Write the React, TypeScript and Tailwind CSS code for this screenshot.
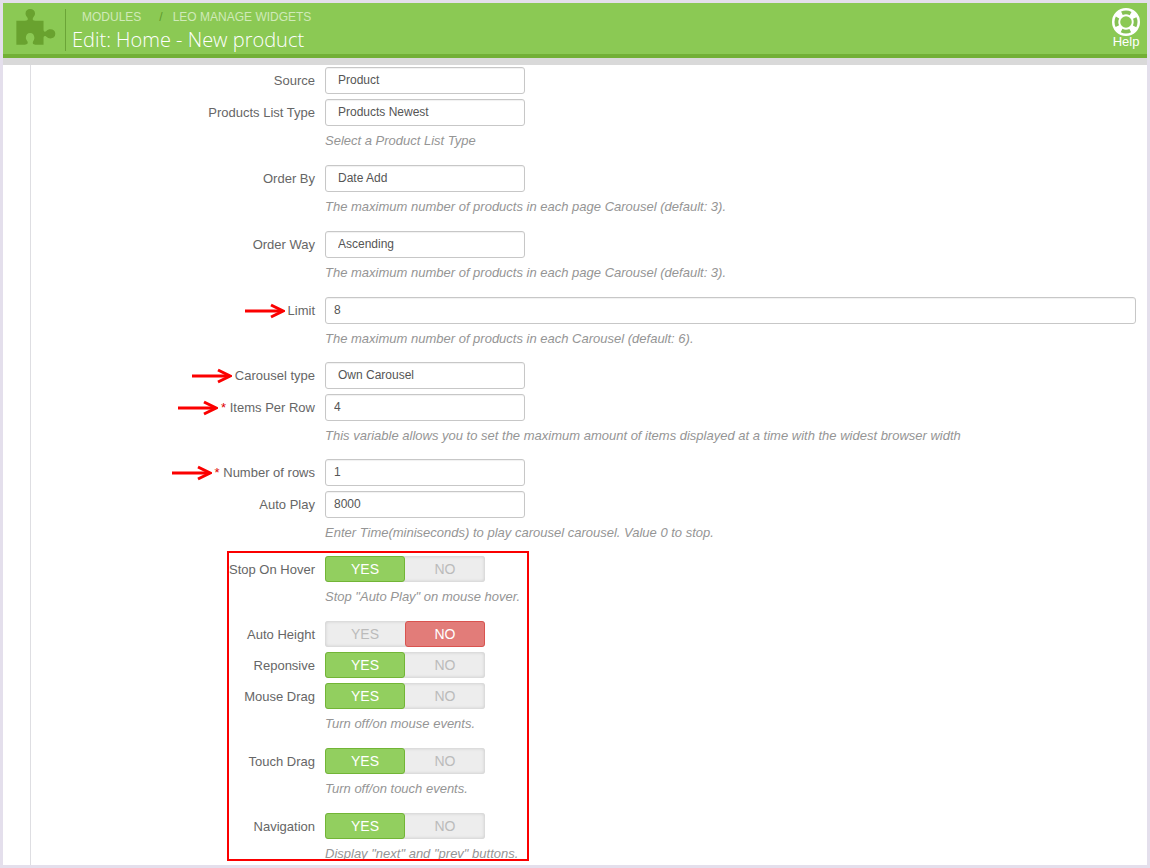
import { useState, type ReactNode } from 'react';

function PuzzleIcon() {
  return (
    <svg className="h-9 w-10 shrink-0" viewBox="0 0 120 110" fill="#69a22f" aria-hidden="true">
      <path d="M0 36 H26 C34 36 37 33 34 27 C30 22 28 18 28 14 C28 5 34 0 42 0 C51 0 57 5 57 14 C57 18 55 22 51 27 C48 33 51 36 58 36 H83 V62 C83 69 86 71 91 68 C95 64 99 62 104 62 C113 62 119 67 119 76 C119 85 113 90 104 90 C99 90 95 88 91 84 C86 81 83 83 83 90 V109 H58 C50 108 49 104 51 99 C54 95 55 92 55 88 C55 79 50 73 42 73 C34 73 29 79 29 88 C29 92 31 95 34 99 C36 104 34 108 26 109 H0 Z" />
    </svg>
  );
}

function LifebuoyIcon() {
  return (
    <svg className="size-7" viewBox="0 0 28 28" fill="none" aria-hidden="true">
      <circle cx="14" cy="14" r="9.9" stroke="#fff" strokeWidth="8.2" />
      <circle cx="14" cy="14" r="9.6" stroke="#85c154" strokeWidth="3.8" strokeDasharray="9 6.08" strokeDashoffset="4.5" />
    </svg>
  );
}

function Arrow() {
  return (
    <svg className="h-4 w-10 shrink-0" viewBox="0 0 40 16" fill="none" stroke="#fb0000" strokeWidth="3" aria-hidden="true">
      <path d="M0 8H37" />
      <path d="M26 2L38 8L26 14" />
    </svg>
  );
}

type RowProps = {
  id: string;
  label: string;
  arrow?: boolean;
  required?: boolean;
  hint?: string;
  hintClass?: string;
  children: ReactNode;
};

function Row({ id, label, arrow, required, hint, hintClass = 'mb-[9px]', children }: RowProps) {
  return (
    <div className="flex gap-2.5">
      <div className="flex h-[26px] w-[284px] shrink-0 items-center justify-end gap-[3px] pt-0.5">
        {arrow && <Arrow />}
        <label id={`${id}-label`} htmlFor={id} className="whitespace-nowrap">
          {required && <span className="text-[#e00000]">* </span>}
          {label}
        </label>
      </div>
      <div className="min-w-0 flex-1">
        {children}
        {hint && <p className={`mt-1.5 leading-[18px] whitespace-nowrap text-[#959595] italic ${hintClass}`}>{hint}</p>}
      </div>
    </div>
  );
}

const boxClass =
  'block h-[27px] appearance-none rounded-[3px] border border-[#c7c7c7] bg-white pb-0.5 text-xs text-[#555] outline-none shadow-[inset_0_1px_1px_rgba(0,0,0,0.06)]';

function SelectRow({ options, ...row }: Omit<RowProps, 'children'> & { options: string[] }) {
  return (
    <Row {...row} hintClass="mb-2.5">
      <select id={row.id} className={`${boxClass} w-[200px] px-3`}>
        {options.map((o) => (
          <option key={o}>{o}</option>
        ))}
      </select>
    </Row>
  );
}

function TextRow({ value, wide, ...row }: Omit<RowProps, 'children'> & { value: string; wide?: boolean }) {
  return (
    <Row {...row}>
      <input id={row.id} type="text" defaultValue={value} className={`${boxClass} ${wide ? 'w-full' : 'w-[200px]'} px-2`} />
    </Row>
  );
}

function SwitchRow({ initial = true, ...row }: Omit<RowProps, 'children'> & { initial?: boolean }) {
  const [on, setOn] = useState(initial);
  const half = 'relative flex flex-1 cursor-pointer items-center justify-center rounded-[3px] border';
  return (
    <Row {...row} hintClass={row.hintClass ?? 'mb-2.5'}>
      <div
        role="radiogroup"
        aria-labelledby={`${row.id}-label`}
        className="flex h-[26px] w-40 rounded-[3px] bg-[#ededed] text-sm text-[#bbb] shadow-[inset_0_0_3px_1px_#d2d2d2]"
      >
        <label className={`${half} ${on ? 'border-[#72b536] bg-[#92cf5f] text-white' : 'border-transparent'}`}>
          <input id={row.id} type="radio" name={row.id} checked={on} onChange={() => setOn(true)} className="sr-only" />
          YES
        </label>
        <label className={`${half} ${on ? 'border-transparent' : 'border-[#d9534f] bg-[#e27c79] text-white'}`}>
          <input type="radio" name={row.id} checked={!on} onChange={() => setOn(false)} className="sr-only" />
          NO
        </label>
      </div>
    </Row>
  );
}

const PER_PAGE = 'The maximum number of products in each page Carousel (default: 3).';

export default function App() {
  return (
    <div className="flex min-h-screen flex-col border-[3px] border-[#e4dfec] bg-white font-['Liberation_Sans',Arial,sans-serif] text-[13px] text-[#666]">
      <header className="flex h-[55px] items-start border-b-4 border-[#72b036] bg-[#8bc954] pr-[7px] pl-[13px]">
        <div className="pt-1.5">
          <PuzzleIcon />
        </div>
        <div className="mt-1.5 ml-[9px] h-[42px] border-l border-[#6ba437] pl-1.5">
          <nav aria-label="Breadcrumb" className="flex pl-2.5 text-xs leading-4 text-[#d0eab9]">
            <a href="#modules">MODULES</a>
            <span className="mr-2.5 ml-[18px] text-[#5f9a2d]">/</span>
            <a href="#widgets">LEO MANAGE WIDGETS</a>
          </nav>
          <h1 className="font-['Open_Sans',sans-serif] text-xl leading-[30px] font-light text-white">Edit: Home - New product</h1>
        </div>
        <a href="#help" className="mt-[5px] ml-auto flex flex-col items-center text-[13px] leading-3 text-white">
          <LifebuoyIcon />
          Help
        </a>
      </header>
      <div className="h-[7px] bg-[#d9d9d9]" />
      <main className="ml-[27px] flex-1 border-l border-[#dedee2] pt-0.5 pr-[11px]">
        <form className="flex flex-col gap-[5px]">
          <SelectRow id="source" label="Source" options={['Product']} />
          <SelectRow id="list-type" label="Products List Type" options={['Products Newest']} hint="Select a Product List Type" />
          <SelectRow id="order-by" label="Order By" options={['Date Add']} hint={PER_PAGE} />
          <SelectRow id="order-way" label="Order Way" options={['Ascending']} hint={PER_PAGE} />
          <TextRow id="limit" label="Limit" arrow wide value="8" hint="The maximum number of products in each Carousel (default: 6)." />
          <SelectRow id="carousel-type" label="Carousel type" arrow options={['Own Carousel']} />
          <TextRow
            id="items"
            label="Items Per Row"
            arrow
            required
            value="4"
            hint="This variable allows you to set the maximum amount of items displayed at a time with the widest browser width"
          />
          <TextRow id="rows" label="Number of rows" arrow required value="1" />
          <TextRow id="auto-play" label="Auto Play" value="8000" hint="Enter Time(miniseconds) to play carousel carousel. Value 0 to stop." />
          <section className="relative flex flex-col gap-[5px]">
            <SwitchRow id="hover" label="Stop On Hover" hint={'Stop "Auto Play" on mouse hover.'} />
            <SwitchRow id="auto-height" label="Auto Height" initial={false} />
            <SwitchRow id="responsive" label="Reponsive" />
            <SwitchRow id="mouse-drag" label="Mouse Drag" hint="Turn off/on mouse events." />
            <SwitchRow id="touch-drag" label="Touch Drag" hint="Turn off/on touch events." />
            <SwitchRow id="navigation" label="Navigation" hint={'Display "next" and "prev" buttons.'} hintClass="mb-0" />
            <div className="pointer-events-none absolute -top-[5px] bottom-0.5 left-[196px] w-[302px] border-2 border-[#fb0000]" />
          </section>
        </form>
      </main>
    </div>
  );
}
